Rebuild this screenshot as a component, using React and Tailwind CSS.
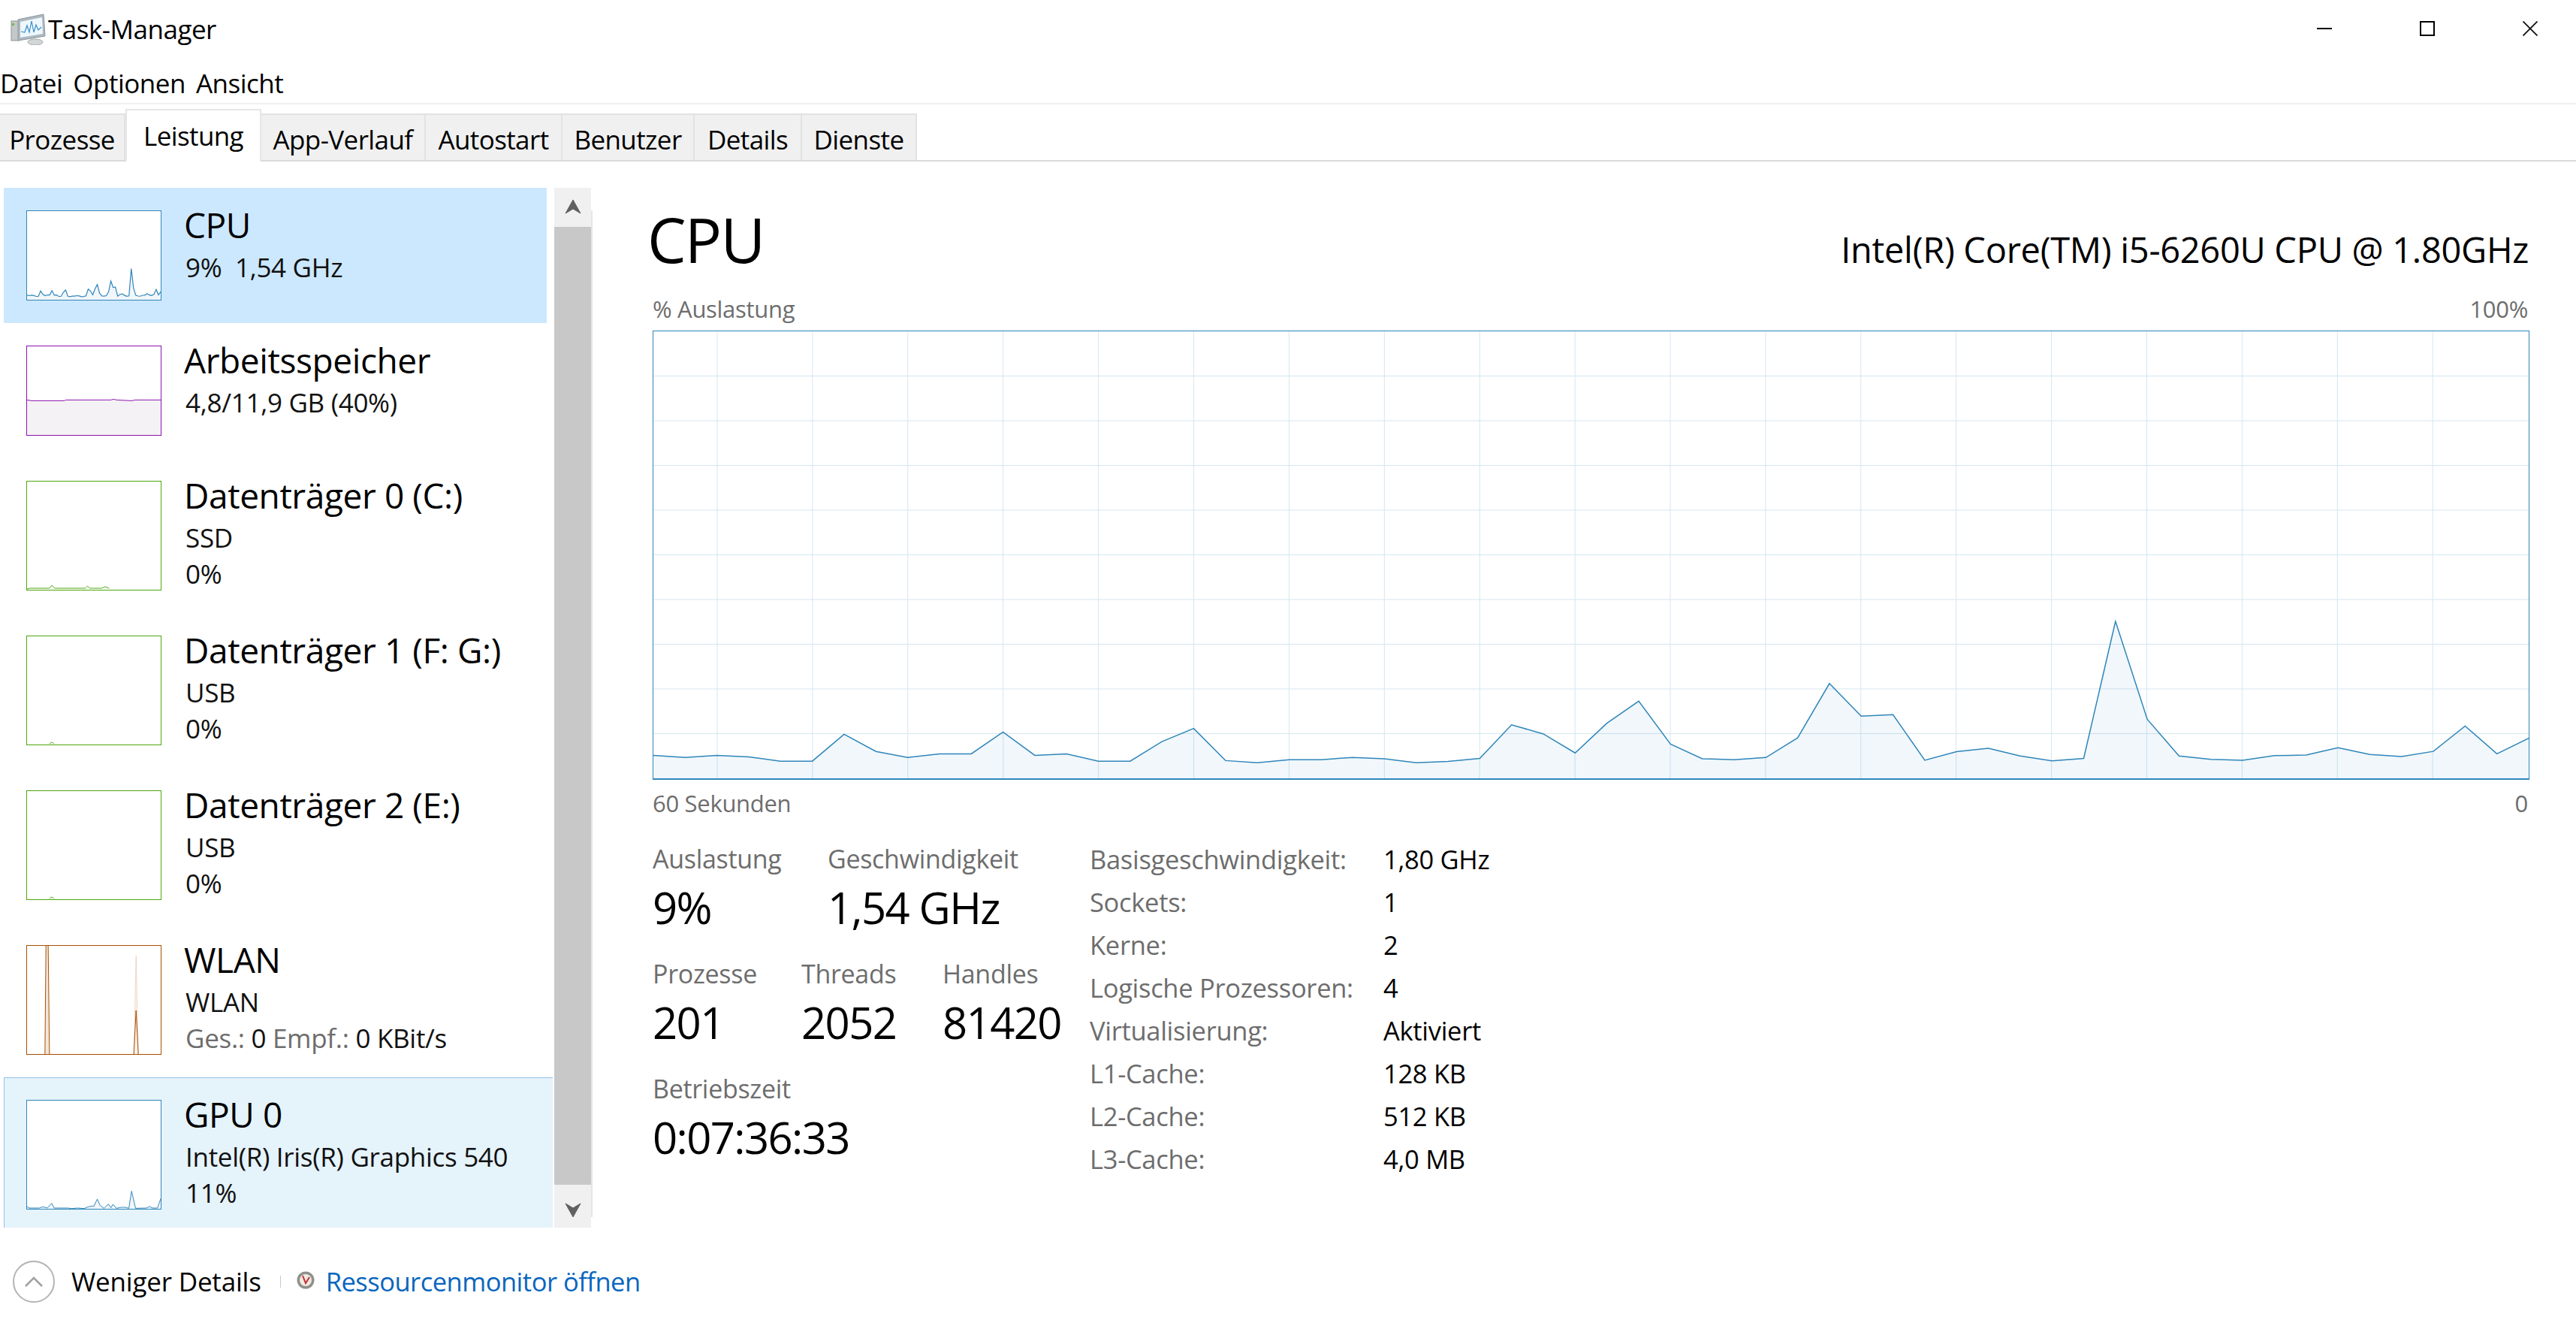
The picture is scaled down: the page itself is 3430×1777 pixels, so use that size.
import React from "react";

const cpuData = [
  1435, 1442, 1435, 1440, 1454, 1454, 1366, 1422, 1442, 1430, 1430, 1359, 1435, 1430, 1454,
  1454, 1390, 1347, 1452, 1459, 1449, 1449, 1442, 1446, 1459, 1455, 1445, 1335, 1365, 1427,
  1330, 1258, 1398, 1446, 1449, 1442, 1378, 1200, 1307, 1302, 1451, 1423, 1412, 1437, 1453,
  1445, 997, 1317, 1437, 1448, 1451, 1436, 1434, 1410, 1432, 1439, 1422, 1339, 1430, 1379,
];

// values are read off the chart, scaled to the 0-100 range
const usage = cpuData.map((v) => ((1510 - v) / 1461) * 100);

const tabs = [
  { label: "Prozesse", width: "w-[167px]" },
  { label: "Leistung", width: "w-[181px]", active: true },
  { label: "App-Verlauf", width: "w-[219px]" },
  { label: "Autostart", width: "w-[182px]" },
  { label: "Benutzer", width: "w-[176px]" },
  { label: "Details", width: "w-[143px]" },
  { label: "Dienste", width: "w-[153px]" },
];

const specs = [
  ["Basisgeschwindigkeit:", "1,80 GHz"],
  ["Sockets:", "1"],
  ["Kerne:", "2"],
  ["Logische Prozessoren:", "4"],
  ["Virtualisierung:", "Aktiviert"],
  ["L1-Cache:", "128 KB"],
  ["L2-Cache:", "512 KB"],
  ["L3-Cache:", "4,0 MB"],
];

function AppIcon() {
  return (
    <svg width="50" height="44" viewBox="0 0 50 44" className="shrink-0">
      <rect x="3" y="12" width="10" height="26" fill="#c4c8c8" stroke="#8f9696" />
      <rect x="4" y="15" width="3" height="3" fill="#6fbb4e" />
      <path d="M12 10 L46 3 L48 32 L12 38 Z" fill="#aeb8bf" stroke="#8d979e" />
      <path d="M15 13 L44 7 L45 29 L15 34 Z" fill="#eef7fc" />
      <polyline
        points="16,26 21,27 24,18 27,27 30,12 33,27 36,17 39,24 43,20"
        fill="none"
        stroke="#3a8fc9"
        strokeWidth="1.2"
      />
      <ellipse cx="35" cy="40" rx="10" ry="4" fill="#d3d6d6" stroke="#a9adad" />
    </svg>
  );
}

function CpuThumb() {
  const pts = usage.map((v, i) => `${(i * 178) / 59},${118 - (v / 100) * 118}`).join(" ");
  return (
    <svg viewBox="0 0 178 118" preserveAspectRatio="none" className="block w-full h-full">
      <polygon points={`0,118 ${pts} 178,118`} fill="#f1f6fa" />
      <polyline points={pts} fill="none" stroke="#2f86ba" strokeWidth="1.2" />
    </svg>
  );
}

function MemThumb() {
  return (
    <svg viewBox="0 0 179 119" preserveAspectRatio="none" className="block w-full h-full">
      <polygon points="0,72 6,73 50,73 52,72 112,72 116,71 120,72 140,73 145,72 179,72 179,119 0,119" fill="#f4f2f4" />
      <polyline points="0,72 6,73 50,73 52,72 112,72 116,71 120,72 140,73 145,72 179,72" fill="none" stroke="#8b12ae" strokeWidth="1" />
    </svg>
  );
}

function DiskThumb({ points }) {
  return (
    <svg viewBox="0 0 179 145" preserveAspectRatio="none" className="block w-full h-full">
      <polyline points={points} fill="none" stroke="#4da60c" strokeWidth="1" />
    </svg>
  );
}

function WlanThumb() {
  return (
    <svg viewBox="0 0 537 435" preserveAspectRatio="none" className="block w-full h-full">
      <polygon points="72,435 76,0 85,0 90,435" fill="#f4e6da" />
      <polyline points="72,435 76,0" fill="none" stroke="#a74f01" strokeWidth="3" />
      <polyline points="85,0 90,435" fill="none" stroke="#a74f01" strokeWidth="3" />
      <polygon points="429,435 438,40 447,435" fill="#fbf1ea" />
      <polyline points="429,435 438,40 447,435" fill="none" stroke="#d9a483" strokeWidth="2" strokeDasharray="4 3" />
      <polyline points="429,435 438,260 447,435" fill="none" stroke="#a74f01" strokeWidth="3" />
    </svg>
  );
}

function GpuThumb() {
  const pts =
    "0,427 9,433 49,433 59,429 69,429 81,433 99,414 109,433 164,433 179,435 204,433 229,435 249,427 269,425 282,397 294,423 309,434 327,417 337,432 345,418 359,434 379,430 394,430 409,434 420,365 436,434 479,433 492,427 504,433 524,433 537,395";
  return (
    <svg viewBox="0 0 537 436" preserveAspectRatio="none" className="block w-full h-full">
      <polygon points={`0,436 ${pts} 537,436`} fill="#f1f6fa" />
      <polyline points={pts} fill="none" stroke="#2f86ba" strokeWidth="3" />
    </svg>
  );
}

function SideItem({ thumb, thumbClass, boxClass, title, children }) {
  return (
    <div className={`flex gap-[32px] shrink-0 ${boxClass}`}>
      <div className={`w-[180px] border bg-white shrink-0 ${thumbClass}`}>{thumb}</div>
      <div className="flex flex-col">
        <div className="text-[46px] leading-[44px] -mt-[3px] -ml-[2px] text-black tracking-[-0.4px] whitespace-nowrap">{title}</div>
        <div className="text-[35px] leading-[48px] mt-[11px] text-[#111] tracking-[-0.3px] whitespace-nowrap">{children}</div>
      </div>
    </div>
  );
}

function MainChart() {
  const w = 2497;
  const h = 595;
  const pts = usage.map((v, i) => `${(i * w) / 59},${h - (v / 100) * h}`).join(" ");
  const hLines = [1, 2, 3, 4, 5, 6, 7, 8, 9];
  const vLines = Array.from({ length: 19 }, (_, i) => 85 + i * 126.9);
  return (
    <div className="w-[2499px] h-[598px] border border-b-2 border-[#2f86ba] bg-white shrink-0">
      <svg viewBox={`0 0 ${w} ${h}`} className="block w-full h-full">
        {hLines.map((i) => (
          <line key={i} x1="0" x2={w} y1={(i * h) / 10} y2={(i * h) / 10} stroke="#d5e6f1" strokeWidth="1" />
        ))}
        {vLines.map((x) => (
          <line key={x} y1="0" y2={h} x1={x} x2={x} stroke="#d5e6f1" strokeWidth="1" />
        ))}
        <polygon points={`0,${h} ${pts} ${w},${h}`} fill="#117dbb" fillOpacity="0.06" />
        <polyline points={pts} fill="none" stroke="#2f86ba" strokeWidth="1.5" />
      </svg>
    </div>
  );
}

function Stat({ label, value, widthClass }) {
  return (
    <div className={`shrink-0 ${widthClass}`}>
      <div className="h-[57px] text-[34px] leading-[57px] text-[#6d6d6d] tracking-[-0.3px] whitespace-nowrap">{label}</div>
      <div className="h-[71px] text-[58px] leading-[71px] text-black tracking-[-1.6px] whitespace-nowrap">{value}</div>
    </div>
  );
}

export default function App() {
  return (
    <div className="w-[3430px] h-[1777px] bg-white flex flex-col overflow-hidden text-black font-['Open_Sans',sans-serif]">
      <div className="h-[75px] flex items-center shrink-0">
        <div className="flex items-center gap-[2px] pl-[12px] flex-1">
          <AppIcon />
          <span className="text-[35px] tracking-[-0.5px] mt-[4px]">Task-Manager</span>
        </div>
        <div className="flex items-center gap-[117px] pr-[51px]">
          <svg width="20" height="20" viewBox="0 0 20 20">
            <line x1="0" x2="20" y1="10" y2="10" stroke="#000" strokeWidth="2" />
          </svg>
          <svg width="20" height="20" viewBox="0 0 20 20">
            <rect x="1" y="1" width="18" height="18" fill="none" stroke="#000" strokeWidth="2" />
          </svg>
          <svg width="20" height="20" viewBox="0 0 20 20">
            <path d="M0.5 0.5 L19.5 19.5 M19.5 0.5 L0.5 19.5" fill="none" stroke="#111" strokeWidth="1.8" />
          </svg>
        </div>
      </div>

      <div className="h-[64px] flex items-center gap-[14px] border-b-2 border-[#f0f0f0] shrink-0 text-[35px] tracking-[-0.5px] pt-[10px]">
        <span>Datei</span>
        <span>Optionen</span>
        <span>Ansicht</span>
      </div>

      <div className="h-[76px] flex items-end border-b-2 border-[#dadada] shrink-0">
        {tabs.map((t) =>
          t.active ? (
            <div
              key={t.label}
              className={`${t.width} h-[70px] -mb-[2px] bg-white border-x-2 border-t-2 border-[#e6e6e6] text-center text-[35px] leading-[68px] tracking-[-0.6px] whitespace-nowrap`}
            >
              {t.label}
            </div>
          ) : (
            <div
              key={t.label}
              className={`${t.width} h-[62px] bg-[#f0f0f0] border-r-2 border-t-2 border-[#e2e2e2] text-center text-[35px] leading-[66px] tracking-[-0.6px] whitespace-nowrap`}
            >
              {t.label}
            </div>
          )
        )}
      </div>

      <div className="flex flex-1 min-h-0">
        <div className="flex pl-[5px] pt-[35px] w-[866px] shrink-0 items-start">
          <div className="w-[731px] h-[1384px] flex flex-col overflow-hidden shrink-0">
            <SideItem boxClass="h-[180px] pl-[30px] pt-[30px] bg-[#cce8ff] mr-[8px]" thumbClass="h-[120px] border-[#2f86ba]" thumb={<CpuThumb />} title="CPU">
              9%&nbsp; 1,54 GHz
            </SideItem>
            <SideItem boxClass="h-[180px] pl-[30px] pt-[30px]" thumbClass="h-[120px] border-[#8b12ae]" thumb={<MemThumb />} title="Arbeitsspeicher">
              4,8/11,9 GB (40%)
            </SideItem>
            <SideItem
              boxClass="h-[206px] pl-[30px] pt-[30px]"
              thumbClass="h-[146px] border-[#4da60c]"
              thumb={<DiskThumb points="0,144 4,143 30,143 33,139 37,143 78,143 81,140 84,143 100,143 104,141 110,143" />}
              title="Datenträger 0 (C:)"
            >
              <div>SSD</div>
              <div>0%</div>
            </SideItem>
            <SideItem boxClass="h-[206px] pl-[30px] pt-[30px]" thumbClass="h-[146px] border-[#4da60c]" thumb={<DiskThumb points="30,144 33,142 36,144" />} title="Datenträger 1 (F: G:)">
              <div>USB</div>
              <div>0%</div>
            </SideItem>
            <SideItem boxClass="h-[206px] pl-[30px] pt-[30px]" thumbClass="h-[146px] border-[#4da60c]" thumb={<DiskThumb points="30,144 33,142 36,144" />} title="Datenträger 2 (E:)">
              <div>USB</div>
              <div>0%</div>
            </SideItem>
            <SideItem boxClass="h-[206px] pl-[30px] pt-[30px]" thumbClass="h-[146px] border-[#a74f01]" thumb={<WlanThumb />} title="WLAN">
              <div>WLAN</div>
              <div>
                <span className="text-[#6d6d6d]">Ges.:</span> 0 <span className="text-[#6d6d6d]">Empf.:</span> 0 KBit/s
              </div>
            </SideItem>
            <SideItem boxClass="h-[200px] pl-[29px] pt-[29px] bg-[#e5f3fb] border-t border-l border-[#8fc7e6]" thumbClass="h-[146px] border-[#2f86ba]" thumb={<GpuThumb />} title="GPU 0">
              <div>Intel(R) Iris(R) Graphics 540</div>
              <div>11%</div>
            </SideItem>
          </div>

          <div className="w-[49px] ml-[2px] h-[1384px] flex flex-col shrink-0 bg-[#c8c8c8]">
            <div className="h-[52px] bg-[#f0f0f0] flex justify-center pt-[15px]">
              <svg width="22" height="20" viewBox="0 0 22 20">
                <path d="M1 19 L11 1 L21 19 L11 13 Z" fill="#606060" stroke="#606060" />
              </svg>
            </div>
            <div className="flex-1" />
            <div className="h-[57px] bg-[#f0f0f0] flex justify-center pt-[24px]">
              <svg width="22" height="20" viewBox="0 0 22 20">
                <path d="M1 1 L11 7 L21 1 L11 19 Z" fill="#606060" stroke="#606060" />
              </svg>
            </div>
          </div>
          <div className="w-[2px] h-[1340px] mt-[30px] bg-[#e6e6e6] shrink-0" />
        </div>

        <div className="w-[2501px] flex flex-col shrink-0">
          <div className="h-[169px] flex justify-between items-center pt-[65px]">
            <span className="text-[82px] leading-none -mt-[28px] -ml-[4px] tracking-[-1.8px]">CPU</span>
            <span className="text-[47px] tracking-[-0.3px]">Intel(R) Core(TM) i5-6260U CPU @ 1.80GHz</span>
          </div>
          <div className="h-[54px] flex justify-between items-center text-[31px] text-[#6d6d6d] tracking-[-0.3px] pl-[3px] pr-[1px]">
            <span>% Auslastung</span>
            <span>100%</span>
          </div>
          <div className="h-[2px] shrink-0" />
          <div className="pl-[3px]">
            <MainChart />
          </div>
          <div className="h-[62px] flex justify-between items-center text-[31px] text-[#6d6d6d] tracking-[-0.3px] pl-[3px] pr-[1px]">
            <span>60 Sekunden</span>
            <span>0</span>
          </div>

          <div className="flex mt-[15px] pl-[3px]">
            <div className="w-[582px] shrink-0 flex flex-col gap-[25px]">
              <div className="flex">
                <Stat label="Auslastung" value="9%" widthClass="w-[233px]" />
                <Stat label="Geschwindigkeit" value="1,54 GHz" widthClass="w-[300px]" />
              </div>
              <div className="flex">
                <Stat label="Prozesse" value="201" widthClass="w-[198px]" />
                <Stat label="Threads" value="2052" widthClass="w-[188px]" />
                <Stat label="Handles" value="81420" widthClass="w-[190px]" />
              </div>
              <Stat label="Betriebszeit" value="0:07:36:33" widthClass="w-[300px]" />
            </div>
            <div className="flex flex-col">
              {specs.map(([k, v]) => (
                <div key={k} className="flex h-[57px] items-center whitespace-nowrap">
                  <span className="w-[391px] text-[34.5px] tracking-[-0.3px] text-[#6d6d6d]">{k}</span>
                  <span className="text-[34.5px] tracking-[-0.3px]">{v}</span>
                </div>
              ))}
            </div>
          </div>
        </div>
      </div>

      <div className="h-[100px] flex items-center shrink-0 pl-[17px] pb-[42px]">
        <div className="w-[56px] h-[56px] rounded-full border-2 border-[#b4b4b4] flex items-center justify-center shrink-0">
          <svg width="24" height="14" viewBox="0 0 24 14">
            <path d="M1 13 L12 2 L23 13" fill="none" stroke="#a0a0a0" strokeWidth="2.5" />
          </svg>
        </div>
        <span className="ml-[22px] text-[35px] tracking-[-0.2px]">Weniger Details</span>
        <div className="w-[1px] h-[16px] bg-[#c8c8c8] ml-[25px]" />
        <svg width="24" height="24" viewBox="0 0 24 24" className="ml-[21px] shrink-0 -mt-[4px]">
          <circle cx="12" cy="12" r="11.5" fill="#8f908c" />
          <circle cx="12" cy="12" r="8" fill="#efe9e2" />
          <path d="M8 6 L12 16 L17 8" fill="none" stroke="#c03030" strokeWidth="2" />
        </svg>
        <span className="ml-[15px] text-[34.5px] tracking-[-0.5px] text-[#0a66bd]">Ressourcenmonitor öffnen</span>
      </div>
    </div>
  );
}
